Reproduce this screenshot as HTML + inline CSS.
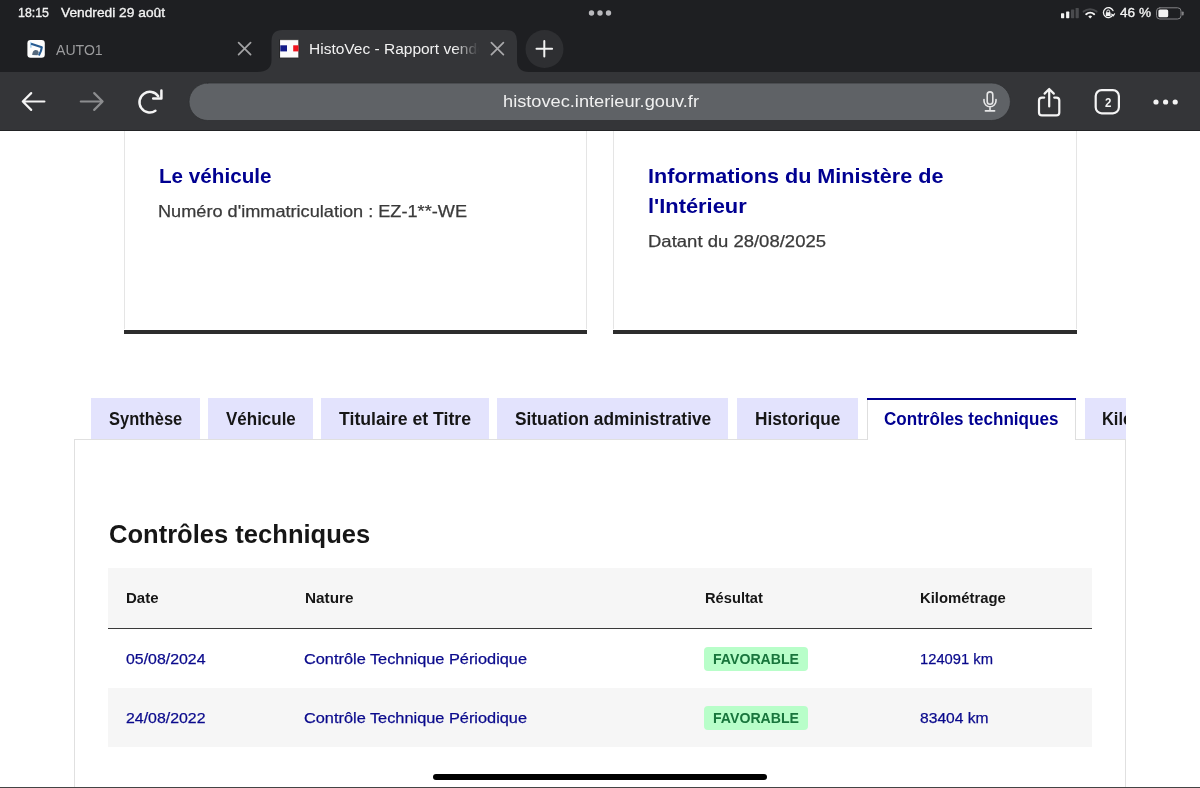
<!DOCTYPE html>
<html><head><meta charset="utf-8"><style>
html,body{margin:0;padding:0;width:1200px;height:788px;overflow:hidden;background:#fff;font-family:"Liberation Sans",sans-serif}
.t{position:absolute;white-space:nowrap;transform-origin:0 0}
.r{-webkit-text-stroke:0.25px currentColor}
</style></head><body>
<div style="position:absolute;left:0;top:0;width:1200px;height:72px;background:#1e1f22"></div>
<div style="position:absolute;left:0;top:72px;width:1200px;height:59px;background:#343538"></div>
<div style="position:absolute;left:0;top:130px;width:1200px;height:1px;background:#222325"></div>
<svg style="position:absolute;left:0;top:0" width="1200" height="131">
<path d="M257,72 Q271.5,72 271.5,60 L271.5,41 Q271.5,30 282.5,30 L506,30 Q517,30 517,41 L517,60 Q517,72 529,72 Z" fill="#343538"/>
<circle cx="544.5" cy="49" r="19" fill="#2e2f32"/>
</svg>
<svg style="position:absolute;left:0;top:0" width="1200" height="131" fill="none" stroke-linecap="round" stroke-linejoin="round">
<!-- status dots -->
<circle cx="591.5" cy="13" r="2.7" fill="#b9b9bd"/><circle cx="600" cy="13" r="2.7" fill="#b9b9bd"/><circle cx="608.5" cy="13" r="2.7" fill="#b9b9bd"/>
<!-- signal -->
<rect x="1061" y="13.3" width="3.2" height="4.9" rx="0.6" fill="#f2f2f2"/>
<rect x="1066.1" y="11.6" width="3.2" height="6.6" rx="0.6" fill="#f2f2f2"/>
<rect x="1071" y="9.6" width="3.2" height="8.6" rx="0.6" fill="#4a4b4e"/>
<rect x="1075.6" y="8" width="3.2" height="10.2" rx="0.6" fill="#4a4b4e"/>
<!-- wifi -->
<path d="M1083.6,11.6 A10,10 0 0 1 1096.6,11.6" stroke="#48494c" stroke-width="2"/>
<path d="M1086.2,14.2 A6.2,6.2 0 0 1 1094.2,14.2" stroke="#f2f2f2" stroke-width="2"/>
<path d="M1088.3,16.4 L1090.2,18.4 L1092.1,16.4 A2.8,2.8 0 0 0 1088.3,16.4 Z" fill="#f2f2f2"/>
<!-- orientation lock -->
<path d="M1113.0,14.6 A5.0,5.0 0 1 1 1113.0,10.6" stroke="#f2f2f2" stroke-width="1.3"/>
<path d="M1111.6,14.2 L1113.3,15.9 L1114.6,13.8" stroke="#f2f2f2" stroke-width="1.1"/>
<rect x="1105.8" y="12.3" width="4.8" height="3.7" rx="0.6" fill="#f2f2f2"/>
<path d="M1106.8,12.5 V11.4 A1.4,1.4 0 0 1 1109.6,11.4 V12.5" stroke="#f2f2f2" stroke-width="1"/>
<!-- battery -->
<rect x="1156.5" y="7.8" width="24.5" height="11.2" rx="3.3" stroke="#838386" stroke-width="1"/>
<rect x="1158.4" y="9.5" width="9.8" height="7.8" rx="1.6" fill="#f2f2f2"/>
<rect x="1181.8" y="11.4" width="1.9" height="4" rx="0.9" fill="#838386"/>
<!-- AUTO1 favicon -->
<rect x="27.4" y="40" width="17.4" height="17.8" rx="3.2" fill="#fdfdfd"/>
<path d="M30.9,42.4 V47.2" stroke="#9fcdf2" stroke-width="1.3"/>
<path d="M31.8,44 L41.8,47.2 Q41.4,51.2 39.2,54.6" stroke="#255a91" stroke-width="2.1"/>
<path d="M32.2,55 Q32.4,50.6 35.4,50 Q38.2,49.8 38.8,52.2 L37.6,55.2 Z" fill="#56697d"/>
<!-- tab close -->
<path d="M238.6,42.6 L250.6,54.6 M250.6,42.6 L238.6,54.6" stroke="#a2a2a4" stroke-width="1.7"/>
<path d="M491.4,42.6 L503.4,54.6 M503.4,42.6 L491.4,54.6" stroke="#a9a9ab" stroke-width="1.7"/>
<!-- flag favicon -->
<rect x="280" y="39.7" width="18.7" height="18.2" fill="#fbfbfb" stroke="#1d1d1d" stroke-width="0.6"/>
<rect x="280.3" y="45.3" width="6.7" height="6.1" fill="#121a88"/>
<rect x="293.2" y="45.3" width="5.3" height="6.1" fill="#f0141e"/>
<!-- plus -->
<path d="M544.3,41 V56.6 M536.5,48.8 H552.1" stroke="#f2f2f2" stroke-width="2"/>
<!-- url pill -->
<rect x="189" y="83" width="821.4" height="37.5" rx="18.75" fill="#5f6266" stroke="#2f3032" stroke-width="0.8"/>
<!-- back/forward -->
<path d="M22.8,101.5 H44.4 M31.2,93.1 L22.8,101.5 L31.2,109.9" stroke="#f4f4f4" stroke-width="2.2"/>
<path d="M80.8,101.5 H102.6 M94.2,93.1 L102.6,101.5 L94.2,109.9" stroke="#8c8d8f" stroke-width="2.2"/>
<!-- reload -->
<path d="M155.4,110.8 A10.3,10.3 0 1 1 158.2,96.3" stroke="#f4f4f4" stroke-width="2.5"/>
<path d="M153.2,98.6 H161.4 V90.6" stroke="#f4f4f4" stroke-width="2.5"/>
<!-- mic -->
<rect x="987.2" y="91.9" width="5.6" height="12.4" rx="2.8" stroke="#e6e6e7" stroke-width="1.6"/>
<path d="M984,99.6 V100.8 A6,6 0 0 0 996,100.8 V99.6 M990,107.2 V110.8 M985.4,110.9 H994.6" stroke="#e6e6e7" stroke-width="1.6"/>
<!-- share -->
<path d="M1044.2,97.6 H1042 A3,3 0 0 0 1039,100.6 V112.4 A3,3 0 0 0 1042,115.4 H1056.3 A3,3 0 0 0 1059.3,112.4 V100.6 A3,3 0 0 0 1056.3,97.6 H1054.2" stroke="#f4f4f4" stroke-width="2.2"/>
<path d="M1049.2,106.5 V89 M1044.6,93.6 L1049.2,89 L1053.8,93.6" stroke="#f4f4f4" stroke-width="2.2"/>
<!-- tabs -->
<rect x="1095.7" y="90.1" width="23.2" height="23.2" rx="6" stroke="#f4f4f4" stroke-width="2.2"/>
<!-- more -->
<circle cx="1156" cy="102" r="2.6" fill="#f4f4f4"/><circle cx="1165.6" cy="102" r="2.6" fill="#f4f4f4"/><circle cx="1175.2" cy="102" r="2.6" fill="#f4f4f4"/>
</svg>
<div class="t" style="left:1104.6px;top:95.9px;font-size:13px;line-height:13px;font-weight:700;color:#f4f4f4;transform:scaleX(0.8852);">2</div>
<div class="t" style="left:17.5px;top:6.199999999999999px;font-size:13.5px;line-height:13.5px;font-weight:400;color:#f2f2f2;transform:scaleX(0.9176);-webkit-text-stroke:0.35px #f2f2f2;">18:15</div>
<div class="t" style="left:61.3px;top:6.199999999999999px;font-size:13.5px;line-height:13.5px;font-weight:400;color:#f2f2f2;transform:scaleX(1.0187);-webkit-text-stroke:0.35px #f2f2f2;">Vendredi 29 ao&ucirc;t</div>
<div class="t" style="left:1119.7px;top:6.199999999999999px;font-size:13.5px;line-height:13.5px;font-weight:400;color:#f2f2f2;transform:scaleX(1.0075);-webkit-text-stroke:0.35px #f2f2f2;">46 %</div>
<div class="t" style="left:55.8px;top:42px;font-size:15.5px;line-height:15.5px;font-weight:400;color:#9c9c9e;transform:scaleX(0.9086);">AUTO1</div>
<div style="position:absolute;left:309px;top:36px;width:170px;height:26px;overflow:hidden;-webkit-mask-image:linear-gradient(90deg,#000 85%,transparent 100%)"><div class="t" style="left:0px;top:5.199999999999999px;font-size:15.5px;line-height:15.5px;font-weight:400;color:#f2f2f2;">HistoVec - Rapport vendeur</div>
</div>
<div class="t" style="left:502.5px;top:92.6px;font-size:17px;line-height:17px;font-weight:400;color:#f0f0f0;transform:scaleX(1.0710);">histovec.interieur.gouv.fr</div>
<div style="position:absolute;left:0;top:131px;width:1200px;height:657px;background:#fff"></div>
<div style="position:absolute;left:123.5px;top:131px;width:463.5px;height:198px;box-shadow:inset 1px 0 0 #e5e5e5,inset -1px 0 0 #e5e5e5"></div>
<div style="position:absolute;left:123.5px;top:330.3px;width:463.5px;height:4.2px;background:#2d2d2d"></div>
<div style="position:absolute;left:613px;top:131px;width:463.5px;height:198px;box-shadow:inset 1px 0 0 #e5e5e5,inset -1px 0 0 #e5e5e5"></div>
<div style="position:absolute;left:613px;top:330.3px;width:463.5px;height:4.2px;background:#2d2d2d"></div>
<div class="t" style="left:158.5px;top:166.2px;font-size:20.5px;line-height:20.5px;font-weight:700;color:#000091;transform:scaleX(1.0075);">Le v&eacute;hicule</div>
<div class="t" style="left:158px;top:203.3px;font-size:16.5px;line-height:16.5px;font-weight:400;color:#3a3a3a;transform:scaleX(1.0997);-webkit-text-stroke:0.25px currentColor;">Num&eacute;ro d'immatriculation : EZ-1**-WE</div>
<div class="t" style="left:648px;top:166.3px;font-size:20.5px;line-height:20.5px;font-weight:700;color:#000091;transform:scaleX(1.0546);">Informations du Minist&egrave;re de</div>
<div class="t" style="left:648px;top:196.2px;font-size:20.5px;line-height:20.5px;font-weight:700;color:#000091;transform:scaleX(1.0660);">l'Int&eacute;rieur</div>
<div class="t" style="left:648px;top:233px;font-size:16.5px;line-height:16.5px;font-weight:400;color:#3a3a3a;transform:scaleX(1.1215);-webkit-text-stroke:0.25px currentColor;">Datant du 28/08/2025</div>
<div style="position:absolute;left:73.5px;top:439px;width:1052px;height:360px;box-shadow:inset 1px 0 0 #e0e0e0,inset -1px 0 0 #e0e0e0,inset 0 1px 0 #e0e0e0"></div>
<div style="position:absolute;left:91px;top:398.3px;width:108.6px;height:41px;background:#e3e3fd"></div>
<div class="t" style="left:109px;top:410.8px;font-size:17.5px;line-height:17.5px;font-weight:700;color:#161616;transform:scaleX(0.9407);">Synth&egrave;se</div>
<div style="position:absolute;left:208.2px;top:398.3px;width:104.5px;height:41px;background:#e3e3fd"></div>
<div class="t" style="left:225.6px;top:410.8px;font-size:17.5px;line-height:17.5px;font-weight:700;color:#161616;transform:scaleX(0.9698);">V&eacute;hicule</div>
<div style="position:absolute;left:321.3px;top:398.3px;width:167.7px;height:41px;background:#e3e3fd"></div>
<div class="t" style="left:339.3px;top:410.8px;font-size:17.5px;line-height:17.5px;font-weight:700;color:#161616;transform:scaleX(1.0111);">Titulaire et Titre</div>
<div style="position:absolute;left:497.4px;top:398.3px;width:231.10000000000002px;height:41px;background:#e3e3fd"></div>
<div class="t" style="left:515px;top:410.8px;font-size:17.5px;line-height:17.5px;font-weight:700;color:#161616;transform:scaleX(0.9890);">Situation administrative</div>
<div style="position:absolute;left:737.3px;top:398.3px;width:120.80000000000007px;height:41px;background:#e3e3fd"></div>
<div class="t" style="left:755.2px;top:410.8px;font-size:17.5px;line-height:17.5px;font-weight:700;color:#161616;transform:scaleX(0.9857);">Historique</div>
<div style="position:absolute;left:867px;top:398px;width:209px;height:42px;background:#fff;box-shadow:inset 1px 0 0 #dedede,inset -1px 0 0 #dedede"></div>
<div style="position:absolute;left:867px;top:398px;width:209px;height:2px;background:#000091"></div>
<div class="t" style="left:884.1px;top:410.8px;font-size:17.5px;line-height:17.5px;font-weight:700;color:#000091;transform:scaleX(0.9747);">Contr&ocirc;les techniques</div>
<div style="position:absolute;left:1084.5px;top:398.3px;width:41px;height:41px;background:#e3e3fd;overflow:hidden"><div class="t" style="left:17.6px;top:12.5px;font-size:17.5px;line-height:17.5px;font-weight:700;color:#161616;transform:scaleX(0.9393);">Kilom&eacute;trage</div>
</div>
<div class="t" style="left:108.75px;top:521.5px;font-size:25px;line-height:25px;font-weight:700;color:#161616;transform:scaleX(1.0221);">Contr&ocirc;les techniques</div>
<div style="position:absolute;left:108px;top:567.5px;width:984px;height:60.5px;background:#f6f6f6"></div>
<div style="position:absolute;left:108px;top:628px;width:984px;height:1px;background:#3a3a3a"></div>
<div style="position:absolute;left:108px;top:688.3px;width:984px;height:58.5px;background:#f6f6f6"></div>
<div class="t" style="left:126.25px;top:590.5px;font-size:14.5px;line-height:14.5px;font-weight:700;color:#161616;transform:scaleX(1.0340);">Date</div>
<div class="t" style="left:304.5px;top:590.5px;font-size:14.5px;line-height:14.5px;font-weight:700;color:#161616;transform:scaleX(1.0560);">Nature</div>
<div class="t" style="left:704.7px;top:590.5px;font-size:14.5px;line-height:14.5px;font-weight:700;color:#161616;transform:scaleX(1.0121);">R&eacute;sultat</div>
<div class="t" style="left:920.3px;top:590.5px;font-size:14.5px;line-height:14.5px;font-weight:700;color:#161616;transform:scaleX(1.0239);">Kilom&eacute;trage</div>
<div class="t" style="left:125.5px;top:651.3px;font-size:15px;line-height:15px;font-weight:400;color:#0a0a8c;transform:scaleX(1.0589);-webkit-text-stroke:0.25px currentColor;">05/08/2024</div>
<div class="t" style="left:303.75px;top:651.3px;font-size:15px;line-height:15px;font-weight:400;color:#0a0a8c;transform:scaleX(1.0885);-webkit-text-stroke:0.25px currentColor;">Contr&ocirc;le Technique P&eacute;riodique</div>
<div class="t" style="left:920.3px;top:651.3px;font-size:15px;line-height:15px;font-weight:400;color:#0a0a8c;transform:scaleX(0.9836);-webkit-text-stroke:0.25px currentColor;">124091 km</div>
<div style="position:absolute;left:704.2px;top:646.5px;width:103.8px;height:24px;background:#b8fec9;border-radius:4px"></div>
<div class="t" style="left:713.3px;top:652.0px;font-size:14.5px;line-height:14.5px;font-weight:700;color:#18753c;transform:scaleX(0.9734);">FAVORABLE</div>
<div class="t" style="left:125.5px;top:710.3px;font-size:15px;line-height:15px;font-weight:400;color:#0a0a8c;transform:scaleX(1.0589);-webkit-text-stroke:0.25px currentColor;">24/08/2022</div>
<div class="t" style="left:303.75px;top:710.3px;font-size:15px;line-height:15px;font-weight:400;color:#0a0a8c;transform:scaleX(1.0885);-webkit-text-stroke:0.25px currentColor;">Contr&ocirc;le Technique P&eacute;riodique</div>
<div class="t" style="left:920.3px;top:710.3px;font-size:15px;line-height:15px;font-weight:400;color:#0a0a8c;transform:scaleX(1.0414);-webkit-text-stroke:0.25px currentColor;">83404 km</div>
<div style="position:absolute;left:704.2px;top:705.5px;width:103.8px;height:24px;background:#b8fec9;border-radius:4px"></div>
<div class="t" style="left:713.3px;top:711.0px;font-size:14.5px;line-height:14.5px;font-weight:700;color:#18753c;transform:scaleX(0.9734);">FAVORABLE</div>
<div style="position:absolute;left:433px;top:773.5px;width:334px;height:6.5px;border-radius:3px;background:#000"></div>
<div style="position:absolute;left:0;top:787px;width:1200px;height:1px;background:#444"></div>

</body></html>
